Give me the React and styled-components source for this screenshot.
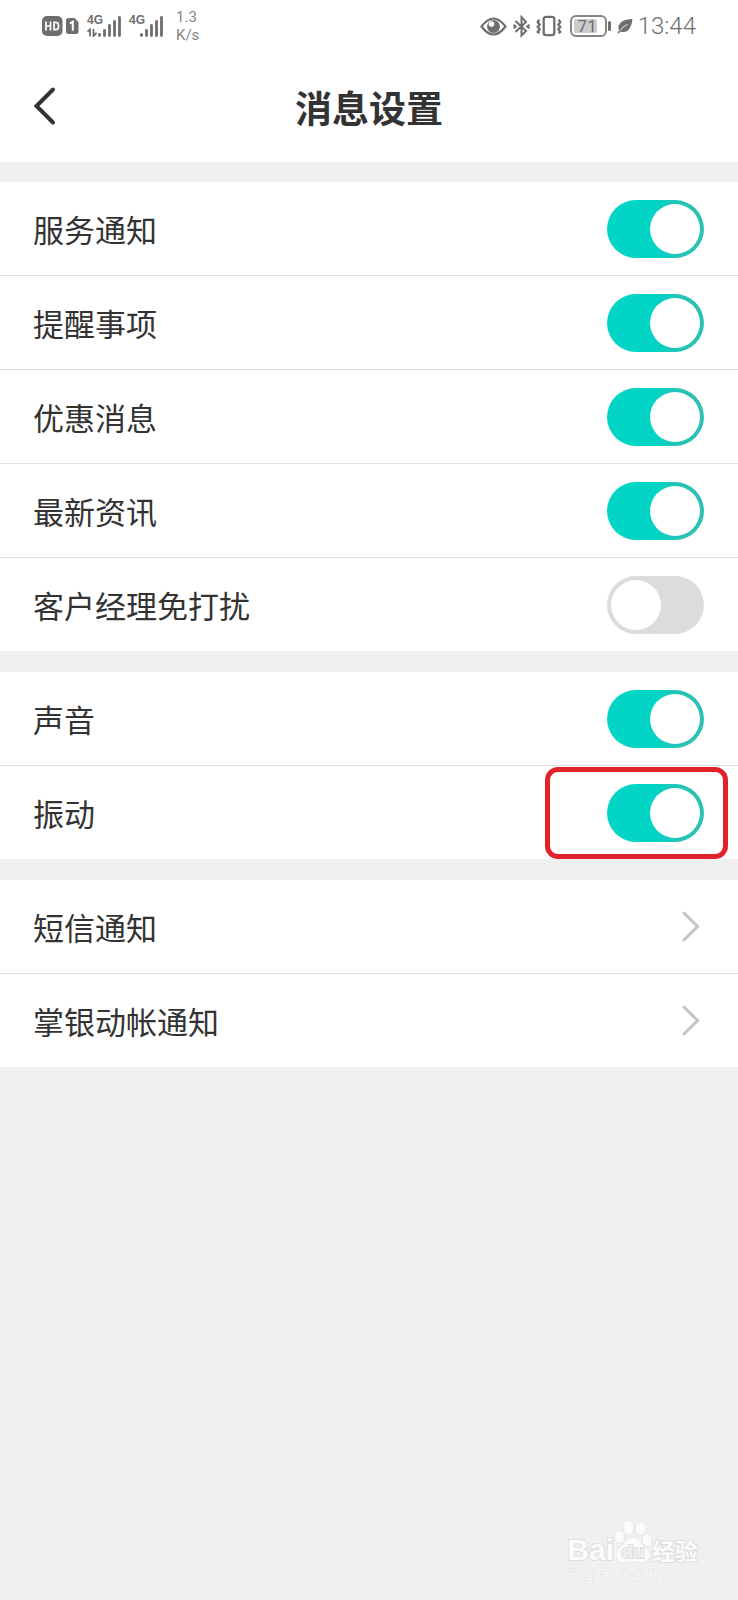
import React from "react";
import styled, { createGlobalStyle } from "styled-components";

const GlobalStyle = createGlobalStyle`
  * {
    box-sizing: border-box;
  }

  body {
    margin: 0;
    background-color: #f0f0f0;
    color: #333;
    font-family: "Noto Sans CJK SC", sans-serif;
  }

  svg {
    display: block;
    flex-shrink: 0;
  }
`;

const Page = styled.div`
  display: flex;
  flex-direction: column;
  min-height: 100vh;
`;

const StatusBar = styled.div`
  display: flex;
  justify-content: space-between;
  height: 52px;
  padding: 0 42px;
  background-color: white;
  color: #6e6e6e;
  font-family: Roboto, sans-serif;
`;

const StatusSide = styled.div`
  display: flex;
  align-items: center;
  gap: ${(props) => (props.$compact ? 6 : 8)}px;
`;

const Network = styled.div`
  position: relative;
`;

const NetworkType = styled.span`
  position: absolute;
  top: -2px;
  left: 0;
  font-family: "Liberation Sans Narrow", "Liberation Sans", sans-serif;
  font-size: 12px;
  font-weight: bold;
  line-height: 12px;
`;

const Speed = styled.div`
  display: flex;
  flex-direction: column;
  margin-left: 5px;
  color: #858585;
  font-size: 15px;
  line-height: 18px;
`;

const Battery = styled.div`
  position: relative;
  width: 37px;
  height: 22px;
  margin: 0 4px 0 2px;
  padding: 2px;
  border: 2px solid #858585;
  border-radius: 6px;

  &::after {
    content: "";
    position: absolute;
    top: 4px;
    right: -6px;
    width: 3px;
    height: 10px;
    border-radius: 2px;
    background-color: #6e6e6e;
  }
`;

const BatteryLevel = styled.div`
  width: 23px;
  border-radius: 2px;
  background-color: #cbcbcb;
  font-size: 17px;
  line-height: 14px;
  text-align: right;
`;

const Clock = styled.span`
  margin-left: -1px;
  font-size: 24px;
  font-weight: 300;
`;

const Header = styled.header`
  position: relative;
  display: flex;
  align-items: center;
  justify-content: center;
  height: 110px;
  background-color: white;
`;

const BackButton = styled.button`
  position: absolute;
  left: 33px;
  padding: 0 0 2px;
  border: none;
  background: none;
`;

const Title = styled.h1`
  margin: 0;
  font-size: 37px;
  font-weight: bold;
  line-height: 54px;
`;

const Groups = styled.main`
  display: flex;
  flex-direction: column;
  gap: 21px;
  padding-top: 20px;
`;

const Group = styled.section`
  background-color: white;
`;

const Row = styled.div`
  position: relative;
  display: flex;
  align-items: center;
  justify-content: space-between;
  min-height: 93px;
  padding: 0 34px 0 33px;

  &:not(:last-child) {
    min-height: 94px;
    border-bottom: 1px solid #dfdfdf;
  }
`;

const Label = styled.label`
  font-size: 31px;
  line-height: 46px;
`;

const RowLink = styled.a`
  display: flex;
  flex: 1;
  align-items: center;
  justify-content: space-between;
  color: inherit;
  font-size: 31px;
  line-height: 46px;
  text-decoration: none;
`;

const Switch = styled.input`
  appearance: none;
  width: 97px;
  height: 58px;
  margin: 0;
  padding: 4px;
  border-radius: 29px;
  background-color: #dcdcdc;

  &::before {
    content: "";
    display: block;
    width: 50px;
    height: 50px;
    border-radius: 50%;
    background-color: white;
  }

  &:checked {
    background: linear-gradient(90deg, #02d4c6 50%, #2bc1b4 80%);
  }

  &:checked::before {
    margin-left: auto;
  }
`;

const Marker = styled.div`
  position: absolute;
  top: 1px;
  right: 10px;
  bottom: 0;
  width: 183px;
  border: 5px solid #e0222b;
  border-radius: 13px;
  pointer-events: none;
`;

const WatermarkBox = styled.footer`
  align-self: flex-end;
  margin-top: auto;
  padding: 0 40px 16px 0;
  color: #fbfbfb;
  -webkit-text-stroke: 2px #dedede;
  paint-order: stroke fill;
`;

const Brand = styled.div`
  display: flex;
  align-items: flex-end;
`;

const BrandText = styled.span`
  font-family: ${(props) =>
    props.$cjk
      ? '"Noto Sans CJK SC", sans-serif'
      : '"Liberation Sans", sans-serif'};
  font-size: ${(props) => (props.$cjk ? 23 : 30)}px;
  font-weight: bold;
  line-height: 28px;
`;

const Paw = styled.div`
  position: relative;
`;

const PawText = styled.span`
  position: absolute;
  right: 0;
  bottom: 2px;
  left: 0;
  color: #f0f0f0;
  font-family: "Liberation Sans", sans-serif;
  font-size: 19px;
  font-weight: bold;
  line-height: 20px;
  text-align: center;
`;

const Site = styled.div`
  margin-top: 3px;
  font-family: "DejaVu Sans", sans-serif;
  font-size: 14px;
  line-height: 17px;
  -webkit-text-stroke: 1px #e2e2e2;
`;

const GROUPS = [
  [
    { id: "service", label: "服务通知", type: "switch", on: true },
    { id: "reminder", label: "提醒事项", type: "switch", on: true },
    { id: "offers", label: "优惠消息", type: "switch", on: true },
    { id: "news", label: "最新资讯", type: "switch", on: true },
    { id: "dnd", label: "客户经理免打扰", type: "switch", on: false },
  ],
  [
    { id: "sound", label: "声音", type: "switch", on: true },
    { id: "vibrate", label: "振动", type: "switch", on: true, marked: true },
  ],
  [
    { id: "sms", label: "短信通知", type: "link" },
    { id: "account", label: "掌银动帐通知", type: "link" },
  ],
];

const SimBadge = () => (
  <svg width="37" height="20" viewBox="0 0 37 20" fill="#6e6e6e">
    <rect x="0" y="0" width="20.5" height="20" rx="5" />
    <path
      d="M4 5.500V14.500M4 10H8.500M8.500 5.500V14.500M12 6.300V13.700H13.500Q16.500 13.700 16.500 11V9Q16.500 6.300 13.500 6.300Z"
      fill="none"
      stroke="#fff"
      strokeWidth="1.700"
    />
    <path d="M26.500 2H32.500L36.500 6V15.500Q36.500 18 34 18H26.500Q24 18 24 15.500V4.500Q24 2 26.500 2Z" />
    <path
      d="M27.800 7.500L30.800 5.800V14.800"
      fill="none"
      stroke="#fff"
      strokeWidth="2"
    />
  </svg>
);

const SignalBars = ({ arrows }) => (
  <svg width="34" height="21" viewBox="0 0 34 21" stroke="#6e6e6e" fill="none">
    {arrows && (
      <path
        d="M0.500 15.500L3 13.500V20.500M6.500 13V20L9.500 17"
        strokeWidth="1.800"
      />
    )}
    <path
      d="M12.500 18.500V19.500M17.500 14.500V19.500M22.500 9.500V19.500M27.500 5.500V19.500M32.500 1.500V19.500"
      strokeWidth="2.800"
      strokeLinecap="round"
    />
  </svg>
);

const EyeIcon = () => (
  <svg width="27" height="19" viewBox="0 0 27 19">
    <path
      d="M1.500 9.500Q13.500 -6.500 25.500 9.500Q13.500 25.500 1.500 9.500Z"
      fill="none"
      stroke="#6e6e6e"
      strokeWidth="2.200"
    />
    <circle cx="13.500" cy="9.500" r="6.500" fill="#6e6e6e" />
    <circle cx="11.500" cy="7" r="2.800" fill="#fff" />
  </svg>
);

const BluetoothIcon = () => (
  <svg
    width="17"
    height="23"
    viewBox="0 0 17 23"
    fill="none"
    stroke="#6e6e6e"
    strokeWidth="2"
  >
    <path d="M2.500 6L13 16L8.500 20.500V2L13 7L2.500 17" />
    <path d="M0.500 9.800L2.800 11.500L0.500 13.200M16.500 9.800L14.200 11.500L16.500 13.200" />
  </svg>
);

const VibrateIcon = () => (
  <svg
    width="26"
    height="22"
    viewBox="0 0 27 22"
    fill="none"
    stroke="#6e6e6e"
  >
    <rect x="8" y="1.500" width="11" height="19" rx="2.500" strokeWidth="2.400" />
    <path
      d="M3.500 4.500L1.800 7L3.800 9.500L1.800 12L3.800 14.500L1.800 17L3.500 18.500M23.500 4.500L25.200 7L23.200 9.500L25.200 12L23.200 14.500L25.200 17L23.500 18.500"
      strokeWidth="2.400"
    />
  </svg>
);

const LeafIcon = () => (
  <svg width="16" height="16" viewBox="0 0 16 16">
    <path
      d="M15.500 1Q9 1 5 3.500Q0 7 2 12.500L0.500 15L1.800 15.500L3.500 13.500Q9 15.500 12.500 10.500Q15 7 15.500 1Z"
      fill="#6e6e6e"
    />
    <path
      d="M3 12.500Q5.500 8.500 10.500 6.500"
      fill="none"
      stroke="#fff"
      strokeWidth="0.900"
    />
  </svg>
);

const PhoneStatus = () => (
  <StatusBar>
    <StatusSide>
      <SimBadge />
      <Network>
        <NetworkType>4G</NetworkType>
        <SignalBars arrows />
      </Network>
      <Network>
        <NetworkType>4G</NetworkType>
        <SignalBars />
      </Network>
      <Speed>
        <span>1.3</span>
        <span>K/s</span>
      </Speed>
    </StatusSide>
    <StatusSide $compact>
      <EyeIcon />
      <BluetoothIcon />
      <VibrateIcon />
      <Battery>
        <BatteryLevel>71</BatteryLevel>
      </Battery>
      <LeafIcon />
      <Clock>13:44</Clock>
    </StatusSide>
  </StatusBar>
);

const SwitchRow = ({ id, label, on, marked }) => {
  const [checked, setChecked] = React.useState(on);

  return (
    <Row>
      <Label htmlFor={id}>{label}</Label>
      <Switch
        id={id}
        type="checkbox"
        role="switch"
        checked={checked}
        onChange={() => setChecked(!checked)}
      />
      {marked && <Marker />}
    </Row>
  );
};

const LinkRow = ({ id, label }) => (
  <Row>
    <RowLink href={`#${id}`}>
      {label}
      <svg width="23" height="32" viewBox="0 0 23 32" fill="none">
        <path
          d="M3 2L16.500 15.500L3 29"
          stroke="#c4c4c4"
          strokeWidth="3"
          strokeLinecap="round"
        />
      </svg>
    </RowLink>
  </Row>
);

const Watermark = () => (
  <WatermarkBox>
    <Brand>
      <BrandText>Bai</BrandText>
      <Paw>
        <svg
          width="38"
          height="44"
          viewBox="0 0 38 44"
          fill="#fbfbfb"
          stroke="#dedede"
        >
          <ellipse cx="5.500" cy="17" rx="4.800" ry="6" />
          <ellipse cx="14.500" cy="7.500" rx="5" ry="7" />
          <ellipse cx="26.500" cy="8.500" rx="5" ry="6.500" />
          <ellipse cx="33" cy="20" rx="4.500" ry="6" />
          <path d="M19 18Q24 18 27 23Q29 26 33 29Q37 33 35 38Q32 43 26 42Q19 41 12 42Q5 43 2.500 38Q1 32 5.500 28Q9 25 11 22Q14 18 19 18Z" />
        </svg>
        <PawText>du</PawText>
      </Paw>
      <BrandText $cjk>经验</BrandText>
    </Brand>
    <Site>jingyan.baidu.com</Site>
  </WatermarkBox>
);

const App = () => (
  <Page>
    <GlobalStyle />
    <PhoneStatus />
    <Header>
      <BackButton type="button" aria-label="返回">
        <svg width="24" height="40" viewBox="0 0 24 40" fill="none">
          <path
            d="M20 3.500L3.500 20L20 36.500"
            stroke="#333"
            strokeWidth="4"
            strokeLinecap="round"
          />
        </svg>
      </BackButton>
      <Title>消息设置</Title>
    </Header>
    <Groups>
      {GROUPS.map((rows) => (
        <Group key={rows[0].id}>
          {rows.map((row) =>
            row.type === "switch" ? (
              <SwitchRow key={row.id} {...row} />
            ) : (
              <LinkRow key={row.id} {...row} />
            )
          )}
        </Group>
      ))}
    </Groups>
    <Watermark />
  </Page>
);

export default App;
